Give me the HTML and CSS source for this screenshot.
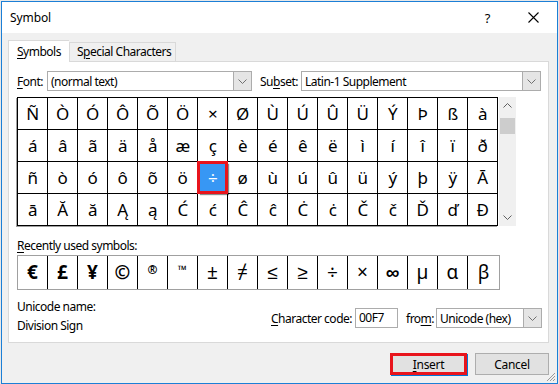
FILE: index.html
```html
<!DOCTYPE html>
<html lang="en">
<head>
    <meta charset="UTF-8">
    <title>Symbol</title>
    <link rel="stylesheet" href="styles.css">
</head>
<body>
    <div class="window">
        <div class="titlebar">
            <span class="title">Symbol</span>
            <span class="help">?</span>
            <svg class="close" width="11" height="11" viewBox="0 0 11 11">
                <path d="M0.5 0.5 L10.5 10.5 M10.5 0.5 L0.5 10.5" stroke="#000" stroke-width="1.1" fill="none"/>
            </svg>
        </div>

        <div class="dialog-body">
            <div class="tabs">
                <div class="tab active"><u>S</u>ymbols</div>
                <div class="tab special">S<u>p</u>ecial Characters</div>
            </div>

            <div class="panel">
                <div class="font-row">
                    <span class="label font-label"><u>F</u>ont:</span>
                    <div class="select font-select">
                        <span class="select-text">(normal text)</span>
                        <span class="drop">
                            <svg width="9" height="5" viewBox="0 0 9 5"><path d="M0.5 0.5 L4.5 4.5 L8.5 0.5" stroke="#707070" fill="none"/></svg>
                        </span>
                    </div>
                    <span class="label subset-label">Su<u>b</u>set:</span>
                    <div class="select subset-select">
                        <span class="select-text">Latin-1 Supplement</span>
                        <span class="drop">
                            <svg width="9" height="5" viewBox="0 0 9 5"><path d="M0.5 0.5 L4.5 4.5 L8.5 0.5" stroke="#707070" fill="none"/></svg>
                        </span>
                    </div>
                </div>

                <div class="grid-area">
                    <div class="grid" id="grid"></div>
                    <div class="scrollbar">
                        <svg class="arrow" width="9" height="5" viewBox="0 0 9 5"><path d="M0.5 4.5 L4.5 0.5 L8.5 4.5" stroke="#606060" fill="none"/></svg>
                        <div class="thumb"></div>
                        <div class="track"></div>
                        <svg class="arrow" width="9" height="5" viewBox="0 0 9 5"><path d="M0.5 0.5 L4.5 4.5 L8.5 0.5" stroke="#606060" fill="none"/></svg>
                    </div>
                </div>

                <div class="recent-label"><u>R</u>ecently used symbols:</div>
                <div class="recent">
                    <div class="rcell heavy">€</div>
                    <div class="rcell heavy">£</div>
                    <div class="rcell heavy">¥</div>
                    <div class="rcell heavy">©</div>
                    <div class="rcell small">®</div>
                    <div class="rcell small">™</div>
                    <div class="rcell">±</div>
                    <div class="rcell">≠</div>
                    <div class="rcell">≤</div>
                    <div class="rcell">≥</div>
                    <div class="rcell">÷</div>
                    <div class="rcell">×</div>
                    <div class="rcell heavy">∞</div>
                    <div class="rcell">µ</div>
                    <div class="rcell">α</div>
                    <div class="rcell">β</div>
                </div>

                <div class="info-row">
                    <div class="uname">
                        <div>Unicode name:</div>
                        <div class="uname-value">Division Sign</div>
                    </div>
                    <div class="code-row">
                        <span class="label"><u>C</u>haracter code:</span>
                        <div class="input">00F7</div>
                        <span class="label from-label">fro<u>m</u>:</span>
                        <div class="select from-select">
                            <span class="select-text">Unicode (hex)</span>
                            <span class="drop">
                                <svg width="9" height="5" viewBox="0 0 9 5"><path d="M0.5 0.5 L4.5 4.5 L8.5 0.5" stroke="#707070" fill="none"/></svg>
                            </span>
                        </div>
                    </div>
                </div>
            </div>

            <div class="buttons">
                <button class="btn insert"><u>I</u>nsert</button>
                <button class="btn">Cancel</button>
            </div>
        </div>

        <svg class="grip" width="10" height="10" viewBox="0 0 10 10">
            <path d="M9 1 L1 9 M9 4 L4 9 M9 7 L7 9" stroke="#9a9a9a" fill="none"/>
        </svg>
    </div>

    <script>
        const rows = [
            'ÑÒÓÔÕÖ×ØÙÚÛÜÝÞßà',
            'áâãäåæçèéêëìíîïð',
            'ñòóôõö÷øùúûüýþÿĀ',
            'āĂăĄąĆćĈĉĊċČčĎďĐ'
        ];
        const grid = document.getElementById('grid');
        rows.forEach(row => {
            for (const ch of row) {
                const cell = document.createElement('div');
                cell.className = 'cell';
                if (ch === '÷') cell.classList.add('selected');
                cell.textContent = ch;
                grid.appendChild(cell);
            }
        });
    </script>
</body>
</html>
```

FILE: styles.css
```css
body {
    margin: 0;
    padding: 1px 1px 0 1px;
    background-color: #e8e8e8;
    font-family: 'Noto Sans', sans-serif;
    font-size: 12px;
    letter-spacing: -0.5px;
    color: #000;
}

u {
    text-decoration-thickness: 1px;
    text-underline-offset: 2px;
}

.window {
    position: relative;
    box-sizing: border-box;
    height: 383px;
    border: 1px solid #1c7fd6;
    background-color: #f0f0f0;
    display: flex;
    flex-direction: column;
}

.titlebar {
    height: 31px;
    background-color: #fff;
    display: flex;
    align-items: center;
    padding: 0 0 0 8px;
}

.title {
    flex: 1;
    letter-spacing: -0.1px;
}

.help {
    font-size: 13px;
    margin-right: 38px;
}

.close {
    margin-right: 18px;
}

.dialog-body {
    flex: 1;
    padding: 8px 8px 0 6px;
}

.tabs {
    display: flex;
    align-items: flex-end;
    height: 20px;
}

.tab {
    box-sizing: border-box;
    height: 19px;
    padding-left: 7px;
    line-height: 18px;
    border: 1px solid #d9d9d9;
    border-bottom: none;
    background-color: #f0f0f0;
    white-space: nowrap;
}

.tab.special {
    width: 107px;
}

.tab.active {
    position: relative;
    width: 61px;
    height: 22px;
    margin-bottom: -1px;
    padding: 2px 0 0 8px;
    background-color: #fff;
    border-right: none;
    z-index: 1;
}

.panel {
    box-sizing: border-box;
    height: 282px;
    background-color: #fff;
    border: 1px solid #d9d9d9;
    padding: 9px 6px 0 8px;
}

.font-row {
    display: flex;
    align-items: center;
    height: 20px;
}

.font-label {
    width: 30px;
}

.select {
    box-sizing: border-box;
    height: 20px;
    display: flex;
    align-items: center;
    border: 1px solid #acacac;
    background-color: #fff;
}

.select-text {
    flex: 1;
    padding-left: 3px;
    white-space: nowrap;
    overflow: hidden;
}

.drop {
    box-sizing: border-box;
    width: 18px;
    height: 18px;
    display: flex;
    align-items: center;
    justify-content: center;
    background-color: #e5e5e5;
    border-left: 1px solid #acacac;
}

.font-select {
    width: 205px;
}

.subset-label {
    width: 41px;
    margin-left: 8px;
}

.subset-select {
    width: 240px;
}

.grid-area {
    display: flex;
    margin-top: 6px;
}

.grid {
    display: grid;
    grid-template-columns: repeat(16, 29px);
    grid-auto-rows: 31px;
    gap: 1px;
    background-color: #000;
    border: 1px solid #000;
    box-shadow: -1px 1px 0 #a0a0a0;
}

.cell {
    background-color: #fff;
    display: flex;
    align-items: center;
    justify-content: center;
    font-size: 17px;
    line-height: 1;
}

.cell.selected {
    position: relative;
    background-color: #3797f4;
    color: #fff;
    box-shadow: 0 0 0 1px #e8141c, inset 0 0 0 2px #e8141c, 2px 2px 1px rgba(0, 0, 0, 0.45);
}

.scrollbar {
    width: 17px;
    display: flex;
    flex-direction: column;
    align-items: center;
    background-color: #f0f0f0;
    margin-left: 1px;
}

.scrollbar .arrow {
    margin: 6px 0;
}

.thumb {
    width: 15px;
    height: 16px;
    margin-top: 4px;
    background-color: #cdcdcd;
}

.track {
    flex: 1;
}

.recent-label {
    margin-top: 12px;
    line-height: 16px;
}

.recent {
    display: grid;
    grid-template-columns: repeat(15, 29px) 31px;
    grid-auto-rows: 33px;
    gap: 1px;
    width: max-content;
    margin-top: 1px;
    background-color: #000;
    border: 1px solid #a0a0a0;
}

.rcell {
    background-color: #fff;
    display: flex;
    align-items: center;
    justify-content: center;
    font-size: 19px;
    line-height: 1;
    letter-spacing: 0;
}

.rcell.heavy {
    font-weight: bold;
}

.rcell.small {
    font-size: 12px;
    font-weight: bold;
    align-items: flex-start;
    padding-top: 8px;
}

.info-row {
    display: flex;
    justify-content: space-between;
    margin-top: 9px;
}

.uname {
    line-height: 16px;
}

.uname-value {
    margin-top: 3px;
}

.code-row {
    display: flex;
    align-items: center;
    margin-top: 9px;
    height: 20px;
}

.input {
    box-sizing: border-box;
    width: 43px;
    height: 20px;
    margin-left: 3px;
    padding-left: 3px;
    line-height: 18px;
    border: 1px solid #acacac;
    background-color: #fff;
}

.from-label {
    width: 27px;
    margin-left: 8px;
}

.from-select {
    width: 106px;
    margin-left: 3px;
}

.buttons {
    display: flex;
    justify-content: flex-end;
    gap: 8px;
    margin-top: 10px;
}

.btn {
    box-sizing: border-box;
    height: 22px;
    width: 74px;
    font-family: 'Noto Sans', sans-serif;
    font-size: 12px;
    letter-spacing: -0.3px;
    color: #000;
    background-color: #e1e1e1;
    border: 1px solid #adadad;
    padding: 0;
}

.btn.insert {
    width: 77px;
    border: 3px solid #e8141c;
    box-shadow: 1px 1px 0 #0078d7;
}

.grip {
    position: absolute;
    right: 1px;
    bottom: 1px;
}
```
